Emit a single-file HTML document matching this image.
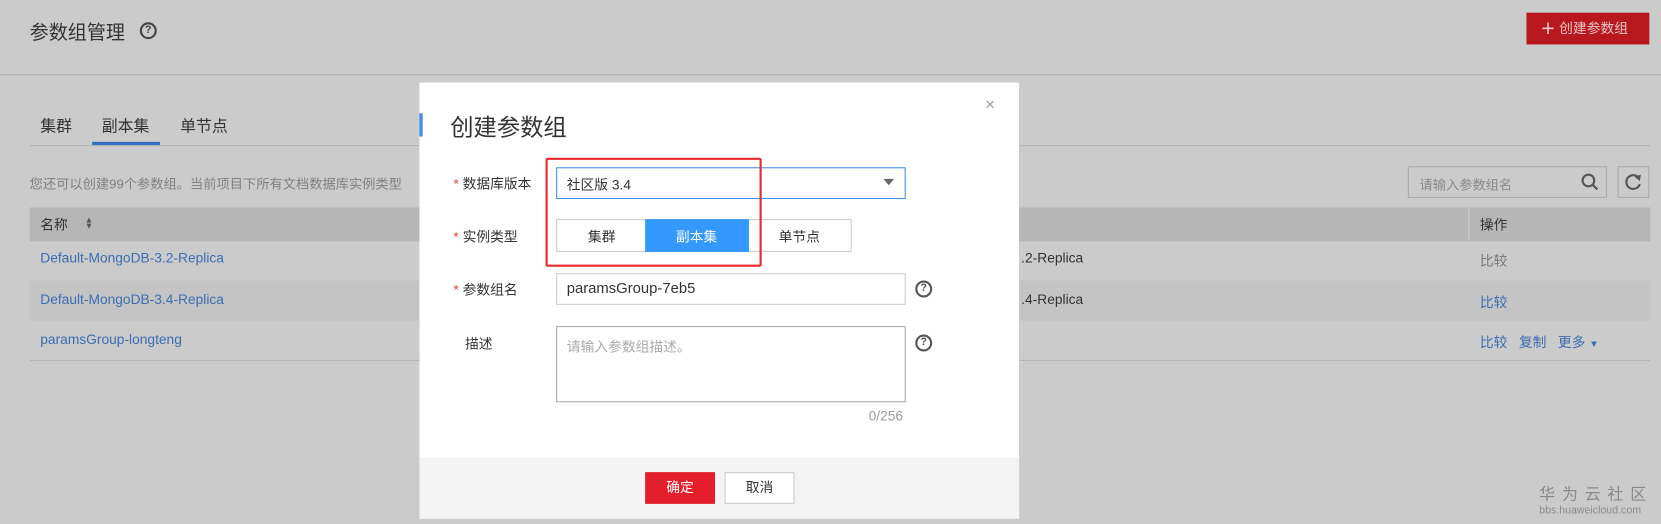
<!DOCTYPE html>
<html><head><meta charset="utf-8"><style>
*{margin:0;padding:0;box-sizing:border-box}
html,body{width:1661px;height:524px;overflow:hidden;background:#cbcbcb}
body{font-family:"Liberation Sans","Noto Sans CJK SC",sans-serif;font-size:13px;color:#333}
#w{position:absolute;left:0;top:0;width:1568px;height:495px;transform:scale(1.05931,1.05859);transform-origin:0 0;background:#cbcbcb}
.a{position:absolute;white-space:nowrap}
.lnk{color:#3b6db0}
.q{position:absolute;width:16px;height:16px;border:2px solid #555;border-radius:50%;font-size:10px;font-weight:bold;line-height:12px;text-align:center;color:#555}
</style></head><body><div id="w">
<div class="a" style="left:28px;top:17px;font-size:18px;color:#333">参数组管理</div>
<div class="q" style="left:132px;top:21px;border-color:#444;color:#444">?</div>
<div class="a" style="left:1441px;top:12px;width:116px;height:30px;background:#b8171e;color:#e8c4c4;font-size:13px;line-height:30px;padding-left:14px"><span style="font-size:22px;vertical-align:-3px;margin-right:4px">+</span>创建参数组</div>
<div class="a" style="left:0;top:70px;width:1568px;height:1px;background:#b4b4b4"></div>
<div class="a" style="left:38px;top:108px;font-size:15px;color:#333">集群</div>
<div class="a" style="left:96px;top:108px;font-size:15px;color:#333">副本集</div>
<div class="a" style="left:170px;top:108px;font-size:15px;color:#333">单节点</div>
<div class="a" style="left:28px;top:137px;width:1530px;height:1px;background:#b4b4b4"></div>
<div class="a" style="left:87px;top:134px;width:64px;height:3px;background:#2e6fc0"></div>
<div class="a" style="left:28px;top:163px;font-size:12.5px;color:#808080">您还可以创建99个参数组。当前项目下所有文档数据库实例类型</div>
<div class="a" style="left:1329px;top:157px;width:188px;height:30px;border:1px solid #aaa"></div>
<div class="a" style="left:1340px;top:164px;font-size:12.5px;color:#888">请输入参数组名</div>
<svg class="a" style="left:1492px;top:163px" width="18" height="18"><circle cx="7.5" cy="7.5" r="5.5" stroke="#555" stroke-width="2" fill="none"/><line x1="11.5" y1="11.5" x2="16" y2="16" stroke="#555" stroke-width="2"/></svg>
<div class="a" style="left:1527px;top:157px;width:30px;height:30px;border:1px solid #aaa"></div>
<svg class="a" style="left:1533px;top:163px" width="18" height="18"><path d="M14 5 A6.5 6.5 0 1 0 15 11" stroke="#555" stroke-width="2" fill="none"/><path d="M10 4 L16 2 L15 8 Z" fill="#555"/></svg>
<div class="a" style="left:28px;top:196px;width:1530px;height:32px;background:#b6b6b6"></div>
<div class="a" style="left:1386px;top:196px;width:1px;height:32px;background:#c8c8c8"></div>
<div class="a" style="left:38px;top:202px;font-size:13px">名称</div>
<div class="a" style="left:80px;top:205px;font-size:8px;line-height:6px;color:#555">▲<br>▼</div>
<div class="a" style="left:1397px;top:202px;font-size:13px">操作</div>
<div class="a" style="left:28px;top:265px;width:1530px;height:38px;background:#c4c4c4"></div>
<div class="a" style="left:28px;top:340px;width:1530px;height:1px;background:#b4b4b4"></div>
<div class="a lnk" style="left:38px;top:236px">Default-MongoDB-3.2-Replica</div>
<div class="a lnk" style="left:38px;top:275px">Default-MongoDB-3.4-Replica</div>
<div class="a lnk" style="left:38px;top:313px">paramsGroup-longteng</div>
<div class="a" style="left:964px;top:236px">.2-Replica</div>
<div class="a" style="left:964px;top:275px">.4-Replica</div>
<div class="a" style="left:1397px;top:236px;color:#777">比较</div>
<div class="a lnk" style="left:1397px;top:275px">比较</div>
<div class="a lnk" style="left:1397px;top:313px">比较 &nbsp; 复制 &nbsp; 更多 <span style="font-size:9px">▼</span></div>
<div class="a" style="left:1453px;top:456px;font-size:15px;color:#888;letter-spacing:6.5px">华为云社区</div>
<div class="a" style="left:1453px;top:477px;font-size:10px;color:#8a8a8a">bbs.huaweicloud.com</div>

<div class="a" style="left:396px;top:78px;width:566px;height:412px;background:#fff"></div>
<div class="a" style="left:396px;top:432px;width:566px;height:58px;background:#f4f4f4"></div>
<div class="a" style="left:396px;top:107px;width:3px;height:22px;background:#3d8ee8"></div>
<div class="a" style="left:425px;top:103px;font-size:22px;color:#333">创建参数组</div>
<div class="a" style="left:930px;top:91px;font-size:16px;color:#999">×</div>
<div class="a" style="left:428px;top:163px"><span style="color:#e5454b">* </span>数据库版本</div>
<div class="a" style="left:428px;top:213px"><span style="color:#e5454b">* </span>实例类型</div>
<div class="a" style="left:428px;top:263px"><span style="color:#e5454b">* </span>参数组名</div>
<div class="a" style="left:439px;top:314px">描述</div>
<div class="a" style="left:525px;top:158px;width:330px;height:30px;border:1px solid #3d8ee8"></div>
<div class="a" style="left:535px;top:164px">社区版 3.4</div>
<div class="a" style="left:834px;top:169px;width:0;height:0;border-left:5px solid transparent;border-right:5px solid transparent;border-top:6px solid #666"></div>
<div class="a" style="left:525px;top:207px;width:279px;height:31px;border:1px solid #ccc"></div>
<div class="a" style="left:609px;top:207px;width:98px;height:31px;background:#3399ff"></div>
<div class="a" style="left:555px;top:213px">集群</div>
<div class="a" style="left:638px;top:213px;color:#fff">副本集</div>
<div class="a" style="left:735px;top:213px">单节点</div>
<div class="a" style="left:515px;top:149px;width:204px;height:103px;border:2px solid #e8282b;border-radius:2px"></div>
<div class="a" style="left:525px;top:258px;width:330px;height:30px;border:1px solid #ccc"></div>
<div class="a" style="left:535px;top:264px;font-size:14px">paramsGroup-7eb5</div>
<div class="q" style="left:864px;top:265px">?</div>
<div class="a" style="left:525px;top:308px;width:330px;height:72px;border:1px solid #aaa"></div>
<div class="a" style="left:535px;top:317px;color:#aaa">请输入参数组描述。</div>
<div class="q" style="left:864px;top:316px">?</div>
<div class="a" style="left:820px;top:385px;color:#999">0/256</div>
<div class="a" style="left:609px;top:446px;width:66px;height:30px;background:#e41e2b;color:#fff;text-align:center;line-height:29px">确定</div>
<div class="a" style="left:684px;top:446px;width:66px;height:30px;background:#fff;border:1px solid #ccc;text-align:center;line-height:27px">取消</div>
</div></body></html>
